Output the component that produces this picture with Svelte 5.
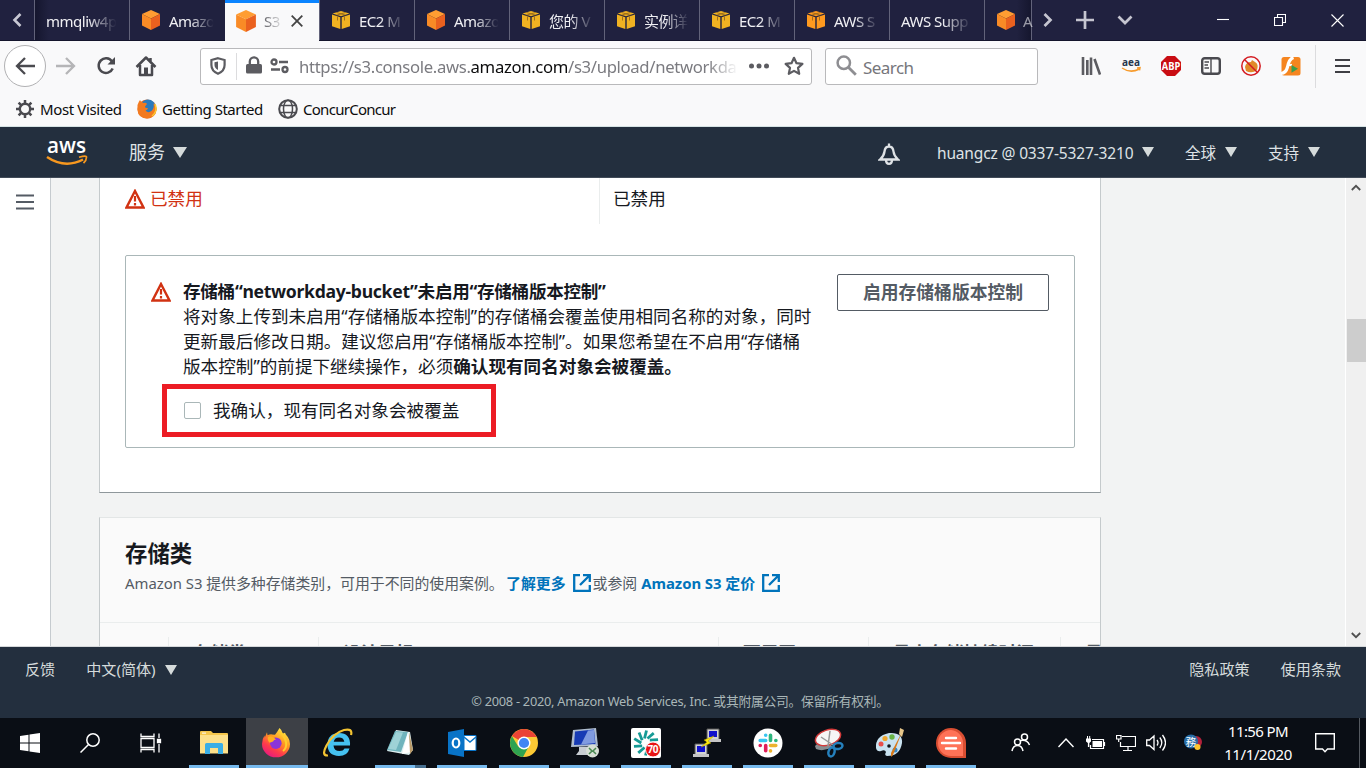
<script>
  const tabs = [
    { icon: 'none', label: 'mmqliw4p', first: true },
    { icon: 's3', label: 'Amazo' },
    { icon: 's3', label: 'S3', active: true },
    { icon: 'ec2', label: 'EC2 M' },
    { icon: 's3', label: 'Amazo' },
    { icon: 'ec2', label: '您的 V' },
    { icon: 'ec2', label: '实例详' },
    { icon: 'ec2', label: 'EC2 M' },
    { icon: 'aws', label: 'AWS S' },
    { icon: 'none', label: 'AWS Supp' }
  ];
  const columns = [
    { w: 69, label: '' },
    { w: 150, label: '存储类' },
    { w: 400, label: '设计目标' },
    { w: 150, label: '可用区' },
    { w: 192, label: '最小存储持续时间' },
    { w: 60, label: '最' }
  ];
  const apps = ['folder', 'firefox', 'ie', 'notepad', 'outlook', 'chrome', 'rdp', 'seventy', 'putty', 'slack', 'snip', 'paint', 'comment'];
  const ticks = [0, 36, 72, 108, 144, 180, 216, 252, 288, 324];
</script>

{#snippet cube(kind)}
  {#if kind === 's3'}
    <svg class="cube" viewBox="0 0 20 20"><path d="M10 0 19 4 10 8.5 1 4Z" fill="#ff9d32" /><path d="M1 4 10 8.5V20L1 15.5Z" fill="#f98b26" /><path d="M19 4 10 8.5V20L19 15.5Z" fill="#ea611f" /></svg>
  {:else}
    <svg class="cube" viewBox="0 0 20 20" fill={kind === 'aws' ? '#ff9a1f' : '#f0b222'}><path d="M10 1 18.500 3.500 10 6.200 1.500 3.500Z" /><path d="M1 4.600 9.300 7.300V19L1 16.300Z" /><path d="M19 4.600 10.700 7.300V19L19 16.300Z" /><path d="M5.500 2.500 14.500 5.200M14.500 2.500 5.500 5.200M6.500 6.500V10.500M13.500 6.500V10.500" stroke="#8a5f1c" stroke-width=".8" /></svg>
  {/if}
{/snippet}

{#snippet warn()}
  <svg class="warn" viewBox="0 0 20 20"><path d="M10 2 18.5 18.500H1.500Z" fill="none" stroke="#d13212" stroke-width="2.400" /><path d="M10 7v5.500M10 14v2.500" stroke="#d13212" stroke-width="2.200" /></svg>
{/snippet}

{#snippet ext()}
  <svg class="ext" viewBox="0 0 18 18" fill="none" stroke="#0073bb" stroke-width="2.300"><path d="M7 1.200H1.200V16.800H16.800V11M10 1.200H16.800V8M16.500 1.500 7 11" /></svg>
{/snippet}

{#snippet app(name)}
  <svg class="app" viewBox="0 0 30 30">
    {#if name === 'folder'}
      <path d="M1 4q0-1 1-1h10l2 2h14q1 0 1 1v19H1Z" fill="#f5c64b" /><path d="M1 7h28v18.5H1Z" fill="#fde08a" /><path d="M3 4.6h4v1H3Z" fill="#fff" /><path d="M6 26V16.5q0-1.5 1.5-1.5h15q1.5 0 1.5 1.5V26h-5v-6h-8v6Z" fill="#3aaee6" />
    {:else if name === 'firefox'}
      <defs><linearGradient id="ff" x1=".8" y1="0" x2=".2" y2="1"><stop offset="0" stop-color="#fff44f" /><stop offset=".4" stop-color="#ff9a1f" /><stop offset=".7" stop-color="#ff3b4b" /><stop offset="1" stop-color="#e31587" /></linearGradient></defs>
      <path d="M18.5 0q2.5 2 3.3 5.5l2.2-.8q.2 1.6 2.8 4.3 2.2 3 2.2 7a14 13.3 0 0 1-28 0q0-5 2.5-8.5l.3 2.1L6 4.3l.5 2.9q2.5-1 4.4-.8l3.1.3Q16 4.5 18.5 0Z" fill="url(#ff)" /><circle cx="14.8" cy="15.2" r="5.8" fill="#8b35d9" /><path d="M7 9q3-2 6 .8l2 1.7q-2.3.2-3 2l-3.3 1.3Q6 12 7 9Z" fill="#ffae22" /><path d="M18 4q5 2 7 10 1 6-3 9" fill="none" stroke="#ffcd2d" stroke-width="2" />
    {:else if name === 'ie'}
      <path d="M27 17.500H10.500q.5 5.500 6 5.500 3.800 0 5-2.500h5q-2 7.500-10.500 7.500Q4.500 27.500 4.500 16.500T16 5Q27.700 5 27 17.500ZM21.300 13.700q-.6-4.300-5.300-4.300-4.300 0-5.300 4.300Z" fill="#45c1f0" /><path d="M5 27.500Q-2 28 3.500 17.500 10.500 5 21 2q9-2 7 5" fill="none" stroke="#f3c332" stroke-width="2.200" />
    {:else if name === 'notepad'}
      <path d="M11 2 25 4 28 22 24 27 2 23Z" fill="#dff0f2" /><path d="M10 3 23 4 16 24 2 22Z" fill="#6fb4bd" /><path d="M11 4 18 4.500 11 22 3 21Z" fill="#9ed2d6" /><path d="M23 4 26 24 17 26Z" fill="#fff" /><path d="M24 4 28 22 25 26Z" fill="#ba9b69" />
    {:else if name === 'outlook'}
      <path d="M1 4 17 1V29L1 26Z" fill="#0873c7" /><path d="M17 7.500h12V22.500H17Z" fill="#fff" stroke="#0873c7" /><path d="m17 9 6 5 6-5" fill="none" stroke="#0873c7" stroke-width="1.500" /><ellipse cx="9" cy="15" rx="3.300" ry="4.500" fill="none" stroke="#fff" stroke-width="2.200" />
    {:else if name === 'chrome'}
      <circle cx="15" cy="15" r="14" fill="#fcc934" /><path d="M15 15 2.900 8A14 14 0 0 1 27.100 8L27.800 9H15Z" fill="#ea4335" /><path d="M2.900 8A14 14 0 0 0 14 29L20 18 15 15 9.500 19Z" fill="#2fa350" /><circle cx="15" cy="15" r="6.500" fill="#fff" /><circle cx="15" cy="15" r="5.100" fill="#4285f4" />
    {:else if name === 'rdp'}
      <path d="M3 2 26 0 28 18 1 19Z" fill="#aebccf" /><path d="M5 3.500 24 1.500 25.500 16 4 17Z" fill="#173bb5" /><path d="M18 2.500 24 2 25 15 11 16.500Z" fill="#809be0" /><path d="M9 19h9v5h5v3H6l3-4Z" fill="#c8cdd2" /><circle cx="22.500" cy="23" r="6.500" fill="#d7dfd5" /><path d="m19 20 3 3-3 3M26 20l-3 3 3 3" fill="none" stroke="#488850" stroke-width="1.500" />
    {:else if name === 'seventy'}
      <rect width="30" height="30" rx="2" fill="#fff" />
      <g fill="none" stroke="#159a95" stroke-width="2.800">{#each ticks as a}<path d="M13.500 10.500 15.500 2.500" transform="rotate({a} 15 15)" />{/each}</g>
      <circle cx="22" cy="21.500" r="7.500" fill="#e91515" stroke="#fff" /><text x="22" y="25.300" text-anchor="middle" font-size="10" font-weight="bold" font-family="Open Sans, sans-serif" textLength="11" fill="#fff">70</text>
    {:else if name === 'putty'}
      <path d="M15 1H27V12H15ZM3 16H15V27H3Z" fill="#d3d3d3" stroke="#555" /><path d="M17 3h8v6h-8ZM5 18h8v6H5Z" fill="#1010cc" /><path d="M14 11h15v3H14ZM1 26h16v3H1Z" fill="#c4c4c4" /><path d="m22 8-10 4 3 2-6 5 10-4-3-2Z" fill="#ffe90a" stroke="#b09c00" stroke-width=".5" />
    {:else if name === 'slack'}
      <circle cx="15" cy="15" r="14.500" fill="#fff" /><g stroke-width="3.600" stroke-linecap="round"><path d="M12.700 7.200V7.300M7.200 12.500H12.700" stroke="#36c5f0" /><path d="M17.500 7.200V12.500M22.800 12.500H22.900" stroke="#2eb67d" /><path d="M17.500 17.500H22.800M17.500 22.800V22.900" stroke="#ecb22e" /><path d="M12.700 17.500V22.800M7.200 17.500H7.300" stroke="#e01e5a" /></g>
    {:else if name === 'snip'}
      <path d="M1 18Q5 13 15 15L19 19Q9 24 2 21Z" fill="#888d91" /><ellipse cx="14" cy="9.500" rx="13" ry="7.500" transform="rotate(-18 14 9.500)" fill="#f6f6f6" stroke="#d33a3a" stroke-width="1.500" /><path d="m7 9 12 8M16 3l-2 15" stroke="#999" stroke-width="1.500" /><g fill="none" stroke="#2580bd" stroke-width="2.500"><ellipse cx="24" cy="18" rx="4.500" ry="3" transform="rotate(-10 24 18)" /><ellipse cx="17.500" cy="24" rx="3" ry="4.500" transform="rotate(15 17.500 24)" /></g>
    {:else if name === 'paint'}
      <path d="M1 20Q0 8 14 5q14-1 13 10-2 13-15 13-3-.5-1-4Q10 21 6 23q-4 1-5-3Z" fill="#c9e2f0" /><circle cx="6" cy="16" r="2.500" fill="#e94f4b" /><circle cx="10" cy="10.500" r="2.600" fill="#efa62f" /><circle cx="17" cy="9" r="2.700" fill="#68b545" /><circle cx="14" cy="18" r="1.800" fill="#10161b" /><circle cx="20" cy="22" r="2.500" fill="#3689c9" /><path d="M27 4 18 27l-2 2v-4Z" fill="#d87919" /><path d="m24 6 1-6 4 2-2 7Z" fill="#e7c68a" />
    {:else}
      <path d="M15 0A15 15 0 1 0 15 30H30V15A15 15 0 0 0 15 0Z" fill="#d94e32" /><path d="M15 2A13 13 0 1 0 15 28H27V15A13 13 0 0 0 15 2Z" fill="#ff7257" /><path d="M10 10H20M6 15H24M10 20.500H20" stroke="#fff" stroke-width="2.400" stroke-linecap="round" />
    {/if}
  </svg>
{/snippet}

<div class="screen">
  <header class="tabbar">
    <div class="scroll-left"><svg width="10" height="16" viewBox="0 0 10 16"><path d="M8.500 2 2.500 8l6 6" fill="none" stroke="#c8c8d4" stroke-width="2.600" /></svg></div>
    {#each tabs as tab}
      <div class="tab" class:active={tab.active} class:plain={tab.icon === 'none'} class:first={tab.first}>
        {#if tab.icon !== 'none'}{@render cube(tab.icon)}{/if}
        <span class="tab-label">{tab.label}</span>
        {#if tab.active}<svg class="close" viewBox="0 0 12 12"><path d="m.7.7 10.600 10.600M11.300.7.7 11.300" stroke="#444" stroke-width="1.800" /></svg>{/if}
      </div>
    {/each}
    <div class="tab last">{@render cube('s3')}<span class="tab-label">A</span></div>
    <div class="tab-tools">
      <svg width="10" height="16" viewBox="0 0 10 16"><path d="m1.500 2 6 6-6 6" /></svg>
      <svg width="18" height="18" viewBox="0 0 18 18"><path d="M9 0V18M0 9H18" /></svg>
      <svg width="16" height="16" viewBox="0 0 16 16"><path d="m1.500 4.500 6.500 6.500 6.500-6.500" /></svg>
    </div>
    <div class="win-tools">
      <svg width="12" height="12" viewBox="0 0 12 12"><path d="M0 5.500H12" /></svg>
      <svg width="12" height="12" viewBox="0 0 12 12"><path d="M.5 3.500h8v8h-8ZM3.500 3.500v-3h8v8h-3" /></svg>
      <svg width="13" height="13" viewBox="0 0 13 13"><path d="m.5.5 12 12M12.500.5l-12 12" /></svg>
    </div>
  </header>

  <div class="toolbar">
    <div class="back"><svg width="20" height="18" viewBox="0 0 20 18"><path d="M20 9H2M10 1 2 9l8 8" fill="none" stroke="#4a4a4f" stroke-width="2.300" /></svg></div>
    <svg class="fwd" width="20" height="18" viewBox="0 0 20 18"><path d="M0 9H18M10 1l8 8-8 8" fill="none" stroke="#b5b5b7" stroke-width="2.300" /></svg>
    <svg class="reload" width="20" height="20" viewBox="0 0 20 20"><path d="M16.700 12.500A7.300 7.300 0 1 1 16 5.500" fill="none" stroke="#4a4a4f" stroke-width="2.500" /><path d="M19 1V8.500H11.500Z" fill="#4a4a4f" /></svg>
    <svg class="home" width="22" height="22" viewBox="0 0 22 22"><path d="M1.500 12 11 2.500 20.500 12M5 10V20H17V10M15.500 3V7" fill="none" stroke="#4a4a4f" stroke-width="2.500" stroke-linejoin="round" /><path d="M9 12.500h4v7H9Z" fill="#4a4a4f" /></svg>
    <div class="urlbar">
      <svg class="shield" width="16" height="18" viewBox="0 0 16 18"><path d="M8 1.200 14.600 3V8q0 6-6.600 8.700Q1.400 14 1.400 8V3Z" fill="none" stroke="#5c5c61" stroke-width="2.200" /><path d="M8 4.500V13Q4.500 11 4.500 8V5.300Z" fill="#5c5c61" /></svg>
      <i class="url-sep"></i>
      <svg class="lock" width="16" height="18" viewBox="0 0 16 18"><path d="M3.800 9V5.500a4.200 4.200 0 0 1 8.400 0V9" fill="none" stroke="#5c5c61" stroke-width="2.300" /><rect y="8" width="16" height="9.500" rx="1.500" fill="#5c5c61" /></svg>
      <svg class="perm" width="19" height="16" viewBox="0 0 19 16"><g fill="none" stroke="#5c5c61" stroke-width="2.300"><circle cx="4" cy="4" r="2.500" /><circle cx="15" cy="11.500" r="2.500" /><path d="M9 4H18M1 11.500H10" /></g></svg>
      <span class="url">https://s3.console.aws.<b>amazon.com</b>/s3/upload/networkda</span>
      <svg class="dots" width="20" height="6" viewBox="0 0 20 6"><g fill="#5c5c61"><circle cx="2.500" cy="3" r="2.500" /><circle cx="10" cy="3" r="2.500" /><circle cx="17.500" cy="3" r="2.500" /></g></svg>
      <svg class="star" width="20" height="20" viewBox="0 0 20 20"><path d="m10 1.800 2.500 5.400 5.900.7-4.400 4 1.200 5.900L10 14.900l-5.200 2.900L6 11.900l-4.400-4 5.900-.7Z" fill="none" stroke="#5c5c61" stroke-width="2.200" stroke-linejoin="round" /></svg>
    </div>
    <div class="search"><svg width="21" height="21" viewBox="0 0 21 21"><circle cx="7.800" cy="7.800" r="6.200" fill="none" stroke="#8e8e92" stroke-width="2.500" /><path d="m12.300 12.300 7.500 7.500" stroke="#8e8e92" stroke-width="2.800" /></svg><span>Search</span></div>
    <div class="extensions">
      <svg viewBox="0 0 20 20"><path d="M2 1V19M6.300 4V19M10 1.500V19M13.500 3 19 18.500" stroke="#5c5c61" stroke-width="2.600" /></svg>
      <svg class="spill" viewBox="0 0 20 20"><text x="10" y="9.500" text-anchor="middle" font-size="11" font-weight="bold" font-family="Open Sans, sans-serif" textLength="18" lengthAdjust="spacingAndGlyphs" fill="#26364d">aea</text><path d="M1 12q8 5.500 17 1.300M16 12l3-.3-.5 2.700" fill="none" stroke="#f79b2b" stroke-width="1.500" /></svg>
      <svg viewBox="0 0 20 20"><path d="M6 0h8l6 6v8l-6 6H6l-6-6V6Z" fill="#c90d13" /><text x="10" y="13.800" text-anchor="middle" font-size="10.500" font-weight="bold" font-family="Open Sans, sans-serif" textLength="18.500" lengthAdjust="spacingAndGlyphs" fill="#fff">ABP</text></svg>
      <svg viewBox="0 0 20 20"><rect x="1.200" y="2.200" width="17.600" height="15.600" rx="2.500" fill="none" stroke="#4a4a4f" stroke-width="2.400" /><path d="M10 3V17M3.500 6H8M3.500 9H7M3.500 12H8" stroke="#4a4a4f" stroke-width="1.400" /></svg>
      <svg viewBox="0 0 20 20"><path d="M4 11q1-5 6-5l1-2 3 2q4 2 2 8-5 4-11 1Z" fill="#e18a28" /><circle cx="10" cy="10" r="9.200" fill="none" stroke="#d41b21" stroke-width="1.500" /><path d="m3.500 3.500 13 13" stroke="#d41b21" stroke-width="1.500" /></svg>
      <svg viewBox="0 0 20 20"><rect x=".5" y="1" width="19" height="18.500" rx="2.500" fill="#f5851f" /><path d="M0 17.500Q5 17 6.500 11 8 3 12.500 1.500" fill="none" stroke="#fff" stroke-width="3.200" /><path d="M6 9h5" stroke="#fff" stroke-width="2.200" /><path d="m10.500 9 6.500 3.700-6.500 4Z" fill="#3b9d4b" /></svg>
    </div>
    <div class="burger"><svg width="15" height="16" viewBox="0 0 15 16"><path d="M0 2H15M0 8H15M0 14H15" stroke="#3f3f44" stroke-width="2.200" /></svg></div>
  </div>

  <div class="bookmarks">
    <svg width="18" height="18" viewBox="0 0 18 18"><circle cx="9" cy="9" r="5.200" fill="none" stroke="#4a4a4f" stroke-width="2.400" /><path d="M9 0V3.500M9 14.500V18M0 9H3.500M14.500 9H18M2.600 2.600 5 5M13 13l2.400 2.400M2.600 15.400 5 13M13 5l2.400-2.400" stroke="#4a4a4f" stroke-width="2.500" /></svg>
    <span class="bm1">Most Visited</span>
    <svg width="20" height="20" viewBox="0 0 20 20"><circle cx="10" cy="10" r="9.500" fill="#e96a20" /><circle cx="11" cy="8" r="7.500" fill="#2b7bbd" /><path d="M.5 6Q2 2 3 1q.5 2 3.500 3Q9 3 10 5L8 7.500q0 2 3 1.500-.5 2-2.500 2.500 2.500 3 6 .5 3-3 2-7.500Q20 7 19.500 11 18 19.500 10 19.500 1 19 .5 11Z" fill="#f27a20" /><path d="M18 5q3 7-3 12" fill="none" stroke="#fcc931" stroke-width="1.500" /></svg>
    <span class="bm2">Getting Started</span>
    <svg width="20" height="20" viewBox="0 0 20 20" fill="none" stroke="#4a4a4f" stroke-width="2"><circle cx="10" cy="10" r="8.800" /><ellipse cx="10" cy="10" rx="4.500" ry="8.800" stroke-width="1.500" /><path d="M2 6.500H18M2 13.500H18" stroke-width="1.500" /></svg>
    <span class="bm3">ConcurConcur</span>
  </div>

  <nav class="awsnav">
    <svg class="logo spill" width="42" height="28" viewBox="0 0 42 28"><text x="1" y="15" font-family="Open Sans, sans-serif" font-size="22" font-weight="600" fill="#fff" textLength="39" lengthAdjust="spacingAndGlyphs">aws</text><path d="M1 19Q19 31 37 21.500" fill="none" stroke="#f7981f" stroke-width="2.500" /><path d="M33 19.200q8-2 7.500 0 0 3-3 6" fill="none" stroke="#f7981f" stroke-width="1.700" /></svg>
    <span class="services">服务</span><i class="tri big"></i>
    <span class="grow"></span>
    <svg class="bell" width="22" height="22" viewBox="0 0 22 22" fill="none" stroke="#dfe3e6" stroke-width="2.300"><path d="M2 16.500Q6 13 6.500 8.500 7 3.500 11 3.500T15.500 8.500Q16 13 20 16.500ZM11 3V.5M8 17q0 3.800 3 3.800t3-3.800" /></svg>
    <span class="account">huangcz @ 0337-5327-3210</span><i class="tri"></i>
    <span class="region">全球</span><i class="tri"></i>
    <span class="support">支持</span><i class="tri"></i>
  </nav>

  <main>
    <aside><svg width="18" height="16" viewBox="0 0 18 16"><path d="M0 1.500H18M0 8H18M0 14.500H18" stroke="#545b64" stroke-width="2.200" /></svg></aside>
    <div class="content">
      <section class="card">
        <div class="status">
          <div class="status-l">{@render warn()}<span>已禁用</span></div>
          <div class="status-r">已禁用</div>
        </div>
        <div class="alert">
          {@render warn()}
          <div class="alert-body">
            <strong class="alert-title">存储桶“networkday-bucket”未启用“存储桶版本控制”</strong>
            <span>将对象上传到未启用“存储桶版本控制”的存储桶会覆盖使用相同名称的对象，同时</span>
            <span>更新最后修改日期。建议您启用“存储桶版本控制”。如果您希望在不启用“存储桶</span>
            <span>版本控制”的前提下继续操作，必须<b>确认现有同名对象会被覆盖。</b></span>
            <label><i class="box"></i>我确认，现有同名对象会被覆盖</label>
          </div>
          <button>启用存储桶版本控制</button>
          <div class="highlight"></div>
        </div>
      </section>
      <section class="card storage">
        <div class="storage-head">
          <h2>存储类</h2>
          <p><span class="p1">Amazon S3 提供多种存储类别，可用于不同的使用案例。</span><a class="l1">了解更多</a>{@render ext()}<span class="p2">或参阅</span><a class="l2">Amazon S3 定价</a>{@render ext()}</p>
        </div>
        <div class="cols">
          {#each columns as c}<div class="col" style="width:{c.w}px">{c.label}</div>{/each}
        </div>
      </section>
    </div>
    <div class="scrollbar">
      <svg width="10" height="7" viewBox="0 0 10 7"><path d="m.8 6 4.200-4.200L9.200 6" /></svg>
      <i class="thumb"></i>
      <svg width="10" height="7" viewBox="0 0 10 7"><path d="m.8 1 4.200 4.200L9.200 1" /></svg>
    </div>
  </main>

  <footer>
    <div class="links"><span>反馈</span><span class="lang">中文(简体)</span><i class="tri"></i><span class="grow"></span><span>隐私政策</span><span class="terms">使用条款</span></div>
    <div class="copy">© 2008 - 2020, Amazon Web Services, Inc. 或其附属公司。保留所有权利。</div>
  </footer>

  <div class="taskbar">
    <div class="sys">
      <svg width="20" height="20" viewBox="0 0 20 20"><path d="M0 3 8.500 1.800V9.500H0ZM9.500 1.600 20 0V9.500H9.500ZM0 10.500H8.500V18.200L0 17ZM9.500 10.500H20V20L9.500 18.400Z" fill="#fff" /></svg>
      <svg width="20" height="20" viewBox="0 0 20 20" fill="none" stroke="#fff" stroke-width="1.500"><circle cx="13" cy="7" r="6.200" /><path d="M8.500 11.500.5 19.500" /></svg>
      <svg width="22" height="20" viewBox="0 0 22 20" fill="none" stroke="#fff" stroke-width="1.300"><path d="M1 5.500H14V14.500H1ZM1 .5V3.500H14V.5M1 19.500V16.500H14V19.500M19 .5V5M19 11V19.500" /><path d="M17.500 6.500h3v3h-3Z" fill="#fff" /></svg>
    </div>
    <div class="apps">
      {#each apps as a, i}
        <div class="slot" class:wide={i < 5} class:on={a === 'firefox'} class:off={a === 'ie'} class:stack={a === 'notepad'}>{@render app(a)}</div>
      {/each}
    </div>
    <div class="tray">
      <svg width="20" height="20" viewBox="0 0 20 20" fill="none" stroke="#fff" stroke-width="1.500"><circle cx="13.500" cy="4" r="3" /><circle cx="6.500" cy="9" r="3" /><path d="M1 18q1-5.500 5.500-5.500T12 18M10 7.500q6-1 8.500 4.500" /></svg>
      <svg class="t2" width="16" height="10" viewBox="0 0 16 10"><path d="m.5 9 7.500-8 7.500 8" fill="none" stroke="#fff" stroke-width="1.400" /></svg>
      <svg class="t3" width="20" height="14" viewBox="0 0 20 14"><path d="M6 3.500H17.500V12.500H4.500V9M18.500 6V10" fill="none" stroke="#fff" stroke-width="1.200" /><path d="M6.500 5H16V11H6.500ZM0 2.500H5V5.500L3.300 7V11H1.900V7L0 5.500Z" fill="#fff" /><path d="M1.500 0V3M3.700 0V3" stroke="#fff" /></svg>
      <svg class="t4" width="20" height="18" viewBox="0 0 20 18" fill="none" stroke="#fff" stroke-width="1.200"><path d="M6 2.500H19.500V12.500H4.500V8M12 12.500V16.500M7 16.500H16M.5 1.500h4.500V5H.5ZM2.700 5V8" /></svg>
      <svg class="t5" width="20" height="18" viewBox="0 0 20 18" fill="none" stroke="#fff" stroke-width="1.300"><path d="M.7 6H3.500L8 2V15.500L3.500 11.500H.7ZM11 6q2 2.800 0 5.500M13.800 3.500q4 5 0 10.500M16.500 1q6 8 0 15.500" /></svg>
      <svg class="t6 spill" width="18" height="18" viewBox="0 0 18 18"><circle cx="12" cy="8" r="6" fill="#b4213b" /><circle cx="7" cy="7.500" r="7" fill="#286ca6" /><text x="7" y="11.500" text-anchor="middle" font-size="10.500" font-family="Noto Sans CJK SC, sans-serif" fill="#fff">務</text><circle cx="13.500" cy="13" r="3" fill="#ffc52d" /></svg>
      <div class="clock"><span>11:56 PM</span><span class="date">11/1/2020</span></div>
      <svg class="t7" width="20" height="20" viewBox="0 0 20 20"><path d="M.7.7H19.300V16H12.500L10 18.700 7.500 16H.7Z" fill="none" stroke="#fff" stroke-width="1.400" /></svg>
      <i class="edge"></i>
    </div>
  </div>
</div>

<style>
  :global(body) { margin: 0; overflow: hidden; }
  * { box-sizing: border-box; }
  svg { flex: none; display: block; }
  .spill { overflow: visible; }
  .screen { width: 1366px; height: 768px; display: flex; flex-direction: column; overflow: hidden; font-family: "Noto Sans", "Noto Sans CJK SC", sans-serif; white-space: nowrap; color: #16191f; background: #fff; }
  .grow { flex: 1; }

  .tabbar { height: 41px; flex: none; display: flex; background: #20213f; border-bottom: 1px solid #14152c; color: #f0f0f4; }
  .scroll-left { width: 34px; display: flex; align-items: center; padding-left: 12px; }
  .tab { width: 95px; flex: none; display: flex; align-items: center; padding-left: 11px; border-left: 1px solid #62637a; }
  .tab.first { background: linear-gradient(90deg, #15162e, #20213f 14px); }
  .cube { width: 20px; height: 20px; }
  .tab-label { margin: 1px 0 0 8px; width: 52px; font-size: 15px; letter-spacing: -.5px; mask-image: linear-gradient(90deg, #000 40%, transparent 86%); }
  .plain .tab-label { margin-left: 0; width: 80px; mask-image: linear-gradient(90deg, #000 52%, transparent 88%); }
  .tab.active { background: #f9f9fa; border: 0; border-top: 3px solid #0a84ff; color: #3c3c42; height: 41px; padding: 0 0 3px 10px; margin-left: 1px; width: 94px; }
  .active .cube { width: 22px; height: 22px; }
  .active .tab-label { margin-left: 7px; width: 20px; flex: none; mask-image: linear-gradient(90deg, rgba(0, 0, 0, .8), transparent); }
  .close { width: 12px; height: 12px; margin-left: 7px; }
  .tab.last { width: 48px; border-right: 1px solid #62637a; background: linear-gradient(270deg, #15162e, #20213f 14px); }
  .last .tab-label { opacity: .6; margin-left: 7px; width: 8px; mask-image: none; }
  .tab-tools { display: flex; align-items: center; gap: 23px; padding-left: 11px; }
  .tab-tools path { fill: none; stroke: #c5c5d0; stroke-width: 2.700; }
  .win-tools { flex: 1; display: flex; align-items: center; justify-content: flex-end; gap: 45px; padding-right: 22px; }
  .win-tools path { fill: none; stroke: #fff; stroke-width: 1.1; }

  .toolbar { height: 49px; flex: none; display: flex; align-items: center; background: #f9f9fa; padding: 1px 0 0 4px; }
  .back { width: 42px; height: 42px; flex: none; border: 1px solid #b1b1b3; border-radius: 50%; background: #fff; display: flex; align-items: center; justify-content: center; }
  .fwd { margin-left: 10px; }
  .reload { margin-left: 20px; }
  .home { margin-left: 19px; }
  .urlbar { width: 612px; height: 37px; flex: none; margin-left: 43px; border: 1px solid #b9b9bb; border-radius: 3px; background: #fff; display: flex; align-items: center; padding-left: 9px; }
  .url-sep { width: 1px; height: 27px; background: #dcdcde; margin: 0 9px 0 10px; }
  .lock { margin-top: -2px; }
  .perm { margin-left: 8px; }
  .url { margin: 1px 0 0 10px; width: 439px; flex: none; font-size: 16.7px; color: #7b7b80; letter-spacing: -.33px; mask-image: linear-gradient(90deg, #000 93%, transparent); }
  .url b { font-weight: 400; color: #0c0c0d; }
  .dots { margin-left: 11px; }
  .star { margin-left: 15px; }
  .search { width: 213px; height: 37px; margin-left: 13px; border: 1px solid #b9b9bb; border-radius: 3px; background: #fff; display: flex; align-items: center; padding-left: 10px; font-size: 17px; color: #76767b; }
  .search span { margin: 2px 0 0 6px; letter-spacing: -.55px; }
  .search svg { margin-top: -2px; }
  .extensions { display: flex; gap: 20px; margin-left: 43px; }
  .extensions svg { width: 20px; height: 20px; }
  .burger { margin-left: 14px; border-left: 1px solid #dcdcde; height: 43px; display: flex; align-items: center; padding-left: 19px; }

  .bookmarks { height: 37px; flex: none; background: #f9f9fa; border-bottom: 1px solid #d6e3e4; display: flex; align-items: center; padding: 2px 0 0 16px; font-size: 15px; color: #0c0c0d; }
  .bm1 { margin-left: 6px; width: 97px; letter-spacing: -.38px; }
  .bm2 { margin-left: 5px; width: 116px; letter-spacing: -.48px; }
  .bm3 { margin-left: 5px; letter-spacing: -.72px; }

  .awsnav { height: 51px; flex: none; background: #232f3e; border-bottom: 1px solid #414b58; display: flex; align-items: center; padding: 0 46px 0 46px; color: #dfe3e6; font-size: 15.5px; }
  .services { margin: -3px 0 0 41px; font-size: 18px; }
  .tri { width: 0; height: 0; border: 6px solid transparent; border-top: 10px solid #d5dbdb; border-bottom: 0; margin-left: 9px; }
  .tri.big { border-width: 11px 7px 0; margin-left: 8px; }
  .bell { margin-right: 37px; margin-top: 4px; }
  .account { width: 197px; letter-spacing: -.15px; margin-top: 1px; margin-right: -1px; }
  .region, .support { margin-left: 31px; }

  main { height: 469px; flex: none; display: flex; background: #f2f3f3; overflow: hidden; border-bottom: 1px solid #d5d8da; }
  aside { width: 51px; background: #fff; border-right: 1px solid #c6cbcf; padding: 16px 0 0 16px; flex: none; }
  .content { width: 1294px; flex: none; padding-left: 48px; }
  .card { width: 1002px; height: 315px; background: #fff; border: 1px solid #c5cacc; border-top: 0; border-bottom-color: #8f979b; padding: 0 25px; }
  .status { display: flex; height: 46px; font-size: 17.6px; line-height: 40px; }
  .status-l { width: 475px; display: flex; color: #d13212; border-right: 1px solid #eaeded; }
  .status-l span { margin-left: 5px; }
  .warn { width: 20px; height: 20px; }
  .status .warn { margin-top: 11px; }
  .status-r { padding-left: 13px; }
  .alert { position: relative; height: 193px; margin-top: 31px; border: 1px solid #aab7b8; border-radius: 2px; display: flex; padding: 18px 25px; }
  .alert .warn { margin-top: 8px; }
  .alert-body { margin-left: 12px; width: 654px; display: flex; flex-direction: column; font-size: 17.6px; line-height: 25px; padding-top: 5px; }
  .alert-title { letter-spacing: -.3px; }
  label { display: flex; align-items: center; margin-top: 19px; }
  .box { width: 17px; height: 17px; border: 1px solid #aab7b8; border-radius: 2px; margin: 0 12px 0 1px; background: #fff; }
  button { width: 212px; height: 37px; border: 1px solid #545b64; border-radius: 2px; background: #fff; color: #545b64; font: 700 17.8px "Noto Sans", "Noto Sans CJK SC", sans-serif; padding: 0 0 4px; }
  .highlight { position: absolute; left: 36px; top: 128px; width: 334px; height: 53px; border: 5px solid #ec1c24; }
  .storage { margin-top: 24px; border-top: 1px solid #e3e6e6; padding: 0; background: #fafafa; height: 200px; }
  .storage-head { height: 105px; border-bottom: 1px solid #eaeded; padding: 20px 25px 0; }
  h2 { margin: 0; font-size: 22.4px; line-height: 32px; }
  p { margin: 0; display: flex; align-items: center; font-size: 14.9px; line-height: 26px; color: #545b64; }
  .p1 { width: 381px; letter-spacing: -.02px; }
  a { color: #0073bb; font-weight: 700; }
  .ext { width: 18px; height: 18px; }
  .l1 + .ext { margin-left: 7px; }
  .p2 { margin-left: 2px; }
  .l2 { margin-left: 4px; width: 115px; letter-spacing: -.05px; }
  .l2 + .ext { margin-left: 6px; }
  .cols { display: flex; padding-top: 14px; width: 1000px; overflow: hidden; }
  .col { flex: none; height: 40px; border-right: 1px solid #eaeded; padding-left: 24px; font-size: 17.6px; font-weight: 700; line-height: 31px; color: #545b64; }
  .scrollbar { width: 21px; flex: none; background: #f0f0f0; border-left: 1px solid #fff; display: flex; flex-direction: column; align-items: center; padding: 6px 0 7px; }
  .scrollbar path { fill: none; stroke: #505050; stroke-width: 1.8; }
  .thumb { width: 19px; height: 43px; background: #cdcdcd; margin: 128px 0 auto; }

  footer { height: 71px; flex: none; background: #232f3e; color: #d5dbdb; font-size: 15.100px; }
  .links { display: flex; align-items: center; height: 46px; padding: 0 25px; }
  .links span { margin-top: -4px; }
  .links .lang { margin-left: 31px; }
  .links .tri { margin-left: 9px; }
  .links .terms { margin-left: 31px; }
  .copy { display: flex; justify-content: center; font-size: 12.8px; line-height: 16px; color: #aab7b8; padding-right: 6px; letter-spacing: -.27px; }

  .taskbar { height: 50px; flex: none; display: flex; background: #0a0e15; color: #fff; }
  .sys { width: 184px; display: flex; align-items: center; gap: 40px; padding-left: 20px; flex: none; }
  .apps { display: flex; width: 798px; flex: none; }
  .slot { width: 61px; flex: none; display: flex; justify-content: center; align-items: center; padding-right: 2px; background: linear-gradient(#76b9ed, #76b9ed) 5px bottom / 50px 3px no-repeat; }
  .slot.wide { width: 62px; }
  .slot.on { background: linear-gradient(#76b9ed, #76b9ed) center bottom / 100% 3px no-repeat, #3d4046; }
  .slot.off { background: none; }
  .slot.stack { background: linear-gradient(90deg, #76b9ed 40px, #476f90 40px) 5px bottom / 51px 3px no-repeat; }
  .app { width: 30px; height: 30px; }
  .tray { flex: 1; display: flex; align-items: center; padding-left: 29px; }
  .t2 { margin-left: 27px; }
  .t3 { margin-left: 12px; }
  .t4, .t5 { margin-left: 10px; }
  .t6 { margin-left: 18px; }
  .clock { margin: -1px 0 0 17px; width: 78px; display: flex; flex-direction: column; align-items: center; font-size: 15px; line-height: 23px; letter-spacing: -.6px; }
  .date { letter-spacing: -.4px; }
  .t7 { margin-left: 18px; }
  .edge { width: 1px; height: 50px; background: #555a61; margin-left: 24px; }
</style>
